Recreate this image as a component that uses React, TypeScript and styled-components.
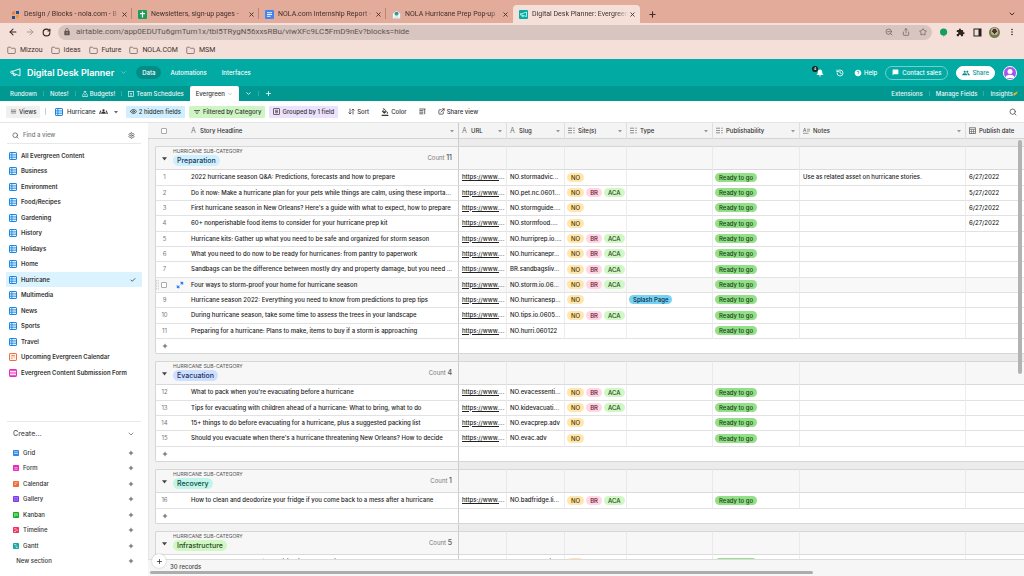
import React from 'react';
import styled, { createGlobalStyle, css } from 'styled-components';
import {
  ArrowLeft, ArrowRight, Check, ChevronDown, ExternalLink, Eye,
  Folder, History, Plus, RotateCw, Search, Settings, Share, Star, X, ZoomOut,
} from 'lucide-react';
import {
  MdChatBubble, MdExtension, MdFilterList, MdFormatColorFill,
  MdGroup, MdGroups, MdHelp, MdLock, MdMenu, MdMoreVert,
} from 'react-icons/md';

const Global = createGlobalStyle`
  *, *::before, *::after { box-sizing: border-box; }
  body { margin: 0; background: #fff; }
  button, input { font: inherit; color: inherit; margin: 0; }
  svg { display: block; flex: none; }
`;

const Shell = styled.div`
  display: flex;
  flex-direction: column;
  height: 100vh;
  overflow: hidden;
  font-family: Inter, "Liberation Sans", sans-serif;
  font-size: 6px;
  line-height: 8px;
  color: #333;
`;

const PlainButton = styled.button`
  display: flex;
  align-items: center;
  justify-content: center;
  padding: 0;
  border: 0;
  background: none;
  white-space: nowrap;
`;

const Spacer = styled.div`
  flex: 1;
`;

/* ---------- browser window ---------- */

const browserFont = 'Roboto, "Liberation Sans", sans-serif';

const TabStrip = styled.div`
  display: flex;
  align-items: flex-end;
  height: 23px;
  padding-left: 5px;
  background: #e3ab99;
  color: #40302b;
  font-family: ${browserFont};
  font-size: 7px;
`;

const BrowserTab = styled.div<{ $active?: boolean; $divider?: boolean }>`
  position: relative;
  display: flex;
  align-items: center;
  gap: 4px;
  width: 127px;
  height: 18px;
  padding: 0 4px 0 6px;
  border-radius: 4px 4px 0 0;
  background: ${(p) => (p.$active ? '#f5e0d9' : 'transparent')};
  ${(p) => p.$divider && css`
    &::after {
      content: '';
      position: absolute;
      right: 0;
      top: 3px;
      width: 1px;
      height: 11px;
      background: #b98675;
    }
  `}
`;

const TabTitle = styled.span`
  flex: 1;
  min-width: 0;
  margin-right: -3px;
  overflow: hidden;
  white-space: nowrap;
  mask-image: linear-gradient(90deg, #000 88%, transparent);
`;

const StripButton = styled(PlainButton)`
  width: 24px;
  height: 18px;
`;

const AddressRow = styled.div`
  display: flex;
  align-items: center;
  height: 18px;
  padding: 0 4px;
  background: #f5e0d9;
  color: #2e2523;
`;

const NavButton = styled(PlainButton)`
  width: 17px;
  height: 14px;
`;

const AddressBar = styled.div`
  display: flex;
  flex: 1;
  align-items: center;
  height: 15px;
  margin: 0 3px;
  padding: 0 1px 0 5px;
  border-radius: 8px;
  background: #d8c5bf;
  color: #5d5450;
`;

const AddressInput = styled.input`
  flex: 1;
  min-width: 0;
  padding: 0;
  margin-left: 5px;
  border: 0;
  outline: 0;
  background: none;
  font-family: ${browserFont};
  font-size: 8px;
  line-height: 10px;
`;

const Face = styled.span`
  width: 11px;
  height: 11px;
  border-radius: 50%;
  background: radial-gradient(circle at 50% 40%, #4c3428 25%, #b9a99a 26% 45%, #6f7f45 46%);
`;

const Bookmarks = styled.nav`
  display: flex;
  align-items: center;
  gap: 8px;
  height: 18px;
  padding: 0 7px;
  background: #f5e0d9;
  color: #3d322f;
  font-family: ${browserFont};
  font-size: 7px;
`;

const Bookmark = styled.a`
  display: flex;
  align-items: center;
  gap: 4px;
  color: inherit;
  text-decoration: none;
`;

/* ---------- base header ---------- */

const BaseBar = styled.header`
  display: flex;
  align-items: center;
  height: 27px;
  padding: 0 7px 0 10px;
  background: #02aaa4;
  color: #fff;
  font-weight: 500;
`;

const BaseTitle = styled.h1`
  margin: 0 6px 0 6px;
  font-size: 9px;
  line-height: 12px;
  font-weight: 600;
`;

const ModeButton = styled(PlainButton)<{ $active?: boolean }>`
  height: 13px;
  padding: 0 6px;
  border-radius: 7px;
  background: ${(p) => (p.$active ? '#068c87' : 'transparent')};
  font-weight: 500;
`;

const Modes = styled.div`
  display: flex;
  gap: 3px;
  margin-left: 9px;
`;

const BarActions = styled.div`
  display: flex;
  align-items: center;
  gap: 8px;
`;

const HeaderButton = styled(PlainButton)`
  position: relative;
  gap: 2px;
  min-width: 12px;
  height: 14px;
`;

const Badge = styled.span`
  position: absolute;
  top: 0;
  left: -2px;
  width: 6px;
  height: 6px;
  border-radius: 3px;
  background: #10201f;
  color: #fff;
  font-size: 4px;
  line-height: 6px;
  text-align: center;
`;

const PillButton = styled(PlainButton)<{ $solid?: boolean }>`
  gap: ${(p) => (p.$solid ? 2 : 3)}px;
  height: 14px;
  padding: 0 ${(p) => (p.$solid ? 5 : 6)}px;
  border: 1px solid ${(p) => (p.$solid ? '#fff' : '#6fd0cc')};
  border-radius: 7px;
  background: ${(p) => (p.$solid ? '#fff' : 'transparent')};
  color: ${(p) => (p.$solid ? '#02908b' : '#fff')};
`;

const Avatar = styled.span`
  width: 14px;
  height: 14px;
  border: 1px solid #fff;
  border-radius: 50%;
  background: #a455f0;
  overflow: hidden;
`;

const TableBar = styled.nav`
  display: flex;
  align-items: stretch;
  height: 15px;
  padding-left: 4px;
  background: #029892;
  color: #e9f7f6;
  font-weight: 500;
`;

const TableTab = styled(PlainButton)<{ $active?: boolean; $tight?: boolean }>`
  gap: ${(p) => (p.$tight ? 0 : 2)}px;
  padding: 0 6px;
  border-radius: 2px 2px 0 0;
  background: ${(p) => (p.$active ? '#fff' : 'transparent')};
  color: ${(p) => (p.$active ? '#333' : 'inherit')};
`;

const TableDivider = styled.span`
  align-self: center;
  width: 1px;
  height: 5px;
  background: #2fada8;
`;

/* ---------- view toolbar ---------- */

const Toolbar = styled.div`
  display: flex;
  align-items: center;
  gap: 4px;
  height: 21px;
  padding: 0 7px 0 6px;
  background: #fff;
  font-weight: 500;
`;

const ToolButton = styled(PlainButton)<{ $tint?: string }>`
  gap: 2px;
  height: 12px;
  padding: 0 4px;
  border-radius: 1px;
  background: ${(p) => p.$tint || 'transparent'};
`;

const ToolGroup = styled.div`
  display: flex;
  gap: 4px;
  padding-left: 2px;
`;

const ToolDivider = styled.span`
  width: 1px;
  height: 7px;
  margin: 0 1px;
  background: #ccc;
`;

/* ---------- sidebar ---------- */

const Body = styled.div`
  display: flex;
  flex: 1;
  min-height: 0;
  border-top: 1px solid #e4e4e4;
`;

const Sidebar = styled.aside`
  display: flex;
  flex-direction: column;
  flex: none;
  width: 148px;
  padding: 0 6px;
  background: #fff;
  font-weight: 600;
`;

const FindRow = styled.label`
  display: flex;
  align-items: center;
  gap: 4px;
  height: 21px;
  margin: 0 1px 4px;
  padding: 4px 6px 0 5px;
  border-bottom: 1px solid #e8e8e8;
  color: #555;
  font-weight: 500;
`;

const FindInput = styled.input`
  flex: 1;
  min-width: 0;
  padding: 0;
  border: 0;
  outline: 0;
  background: none;
  &::placeholder { color: #777; opacity: 1; }
`;

const List = styled.ul`
  margin: 0;
  padding: 0;
  list-style: none;
`;

const ListItem = styled.li<{ $selected?: boolean }>`
  display: flex;
  height: 15px;
  border-radius: 1px;
  background: ${(p) => (p.$selected ? '#dbf3fe' : 'transparent')};
  &:nth-child(even) { height: 16px; }
`;

const ViewButton = styled(PlainButton)`
  flex: 1;
  justify-content: flex-start;
  gap: 4px;
  padding: 0 6px 0 3px;
`;

const CreateButton = styled(ViewButton)`
  padding: 0 8px 0 7px;
`;

const CreateHeading = styled(PlainButton)`
  justify-content: space-between;
  height: 24px;
  margin: 0 1px;
  padding: 0 6px;
  border-top: 1px solid #e8e8e8;
  font-size: 7px;
  font-weight: 500;
  color: #555;
`;

const CreateBlock = styled.section`
  display: flex;
  flex-direction: column;
  padding-bottom: 7px;
  font-weight: 500;
`;

/* ---------- grid ---------- */

const GridPane = styled.main`
  position: relative;
  display: flex;
  flex: 1;
  flex-direction: column;
  min-width: 0;
  background: #f2f2f2;
`;

const GridScroll = styled.div`
  flex: 1;
  min-height: 0;
  overflow: hidden;
`;

const Table = styled.table`
  width: max(100%, 908px);
  table-layout: fixed;
  border-collapse: separate;
  border-spacing: 0;
`;

const Col = styled.col<{ $w?: number }>`
  width: ${(p) => (p.$w ? `${p.$w}px` : 'auto')};
`;

const Th = styled.th<{ $line?: string }>`
  height: 16px;
  padding: 0 4px 0 3px;
  border-bottom: 1px solid #d4d4d4;
  border-right: ${(p) => (p.$line ? `1px solid ${p.$line}` : '0')};
  background: #f4f4f4;
  font-weight: 500;
  text-align: left;
  white-space: nowrap;
`;

const ThInner = styled.span<{ $primary?: boolean }>`
  display: flex;
  align-items: center;
  gap: 3px;
  padding-left: ${(p) => (p.$primary ? 1 : 0)}px;
`;

const TextGlyph = styled.span`
  width: 6px;
  font-size: 7px;
  font-weight: 400;
  color: #777;
`;

const GapCell = styled.td<{ $dark?: boolean }>`
  height: 7px;
  padding: 0;
  background: ${(p) => (p.$dark ? '#ececec' : '#f2f2f2')};
  border-left: ${(p) => (p.$dark ? '0' : '1px solid #e4e4e4')};
  border-right: ${(p) => (p.$dark ? '0' : '1px solid #ccc')};
`;

const Gutter = styled.td`
  padding: 0;
  border-left: 1px solid #e4e4e4;
`;

const GroupHead = styled.td<{ $first?: boolean; $line?: string }>`
  height: 24px;
  padding: 0;
  border-top: 1px solid #d6d6d6;
  border-bottom: 1px solid #dadada;
  border-left: ${(p) => (p.$first ? '1px solid #d6d6d6' : '0')};
  border-right: 1px solid ${(p) => p.$line || '#e9e9e9'};
  border-radius: ${(p) => (p.$first ? '2px 0 0 0' : '0')};
  background: #f7f7f7;
`;

const GroupInner = styled.div`
  display: flex;
  align-items: center;
  padding-right: 6px;
`;

const Toggle = styled(PlainButton)`
  width: 17px;
  height: 14px;
`;

const GroupLabel = styled.div`
  display: flex;
  flex: 1;
  flex-direction: column;
  align-items: flex-start;
  padding-bottom: 3px;
`;

const GroupField = styled.span`
  font-size: 5px;
  line-height: 8px;
  color: #555;
`;

const Count = styled.span`
  color: #777;
  strong { font-size: 7px; font-weight: 500; color: #555; }
`;

const Chip = styled.span<{ $bg: string; $fg: string; $large?: boolean }>`
  flex: none;
  padding: 0 4px;
  border-radius: 6px;
  background: ${(p) => p.$bg};
  color: ${(p) => p.$fg};
  font-size: ${(p) => (p.$large ? 7 : 6)}px;
  font-weight: 500;
  line-height: ${(p) => (p.$large ? 11 : 9)}px;
`;

const Chips = styled.div`
  display: flex;
  gap: 2px;
  margin-left: -1px;
`;

const Row = styled.tr<{ $hover?: boolean }>`
  --cell: ${(p) => (p.$hover ? '#f8f8f8' : '#fff')};
  height: 15px;
  &:nth-child(3n) { height: 16px; }
`;

const Td = styled.td<{ $kind?: 'number' | 'icon' | 'head' }>`
  padding: 0 0 1px 3px;
  overflow: hidden;
  border-bottom: 1px solid #e2e2e2;
  border-right: 1px solid #ececec;
  background: var(--cell);
  color: #222;
  font-weight: 500;
  white-space: nowrap;
  ${(p) => p.$kind === 'number' && css`
    padding: 0 0 1px;
    border-left: 1px solid #d6d6d6;
    border-right: 0;
    color: #777;
    font-weight: 400;
    text-align: center;
  `}
  ${(p) => p.$kind === 'icon' && css`
    border-right: 0;
  `}
  ${(p) => p.$kind === 'head' && css`
    padding-left: 4px;
    border-right-color: #ccc;
  `}
`;

const AddCell = styled.td<{ $first?: boolean }>`
  padding: 0;
  border-bottom: 1px solid #d6d6d6;
  background: #fff;
  ${(p) => p.$first && css`
    border-left: 1px solid #d6d6d6;
    border-right: 1px solid #ccc;
    border-radius: 0 0 0 2px;
  `}
`;

const AddRow = styled.tr`
  height: 15px;
`;

const CellLink = styled.a`
  color: inherit;
  text-decoration: underline;
`;

const Tick = styled.input`
  display: block;
  appearance: none;
  width: 6px;
  height: 6px;
  border: 1px solid #aaa;
  border-radius: 1px;
  background: #fff;
`;

const TickWrap = styled.span<{ $grip?: boolean }>`
  display: flex;
  gap: 2px;
  justify-content: ${(p) => (p.$grip ? 'flex-start' : 'center')};
  align-items: center;
`;

const Footer = styled.footer`
  position: relative;
  display: flex;
  flex-direction: column;
  justify-content: space-between;
  height: 17px;
  padding: 3px 2px 2px;
  border-top: 1px solid #dcdcdc;
  background: #f6f6f6;
  color: #444;
  font-weight: 500;
`;

const RecordCount = styled.span`
  padding-left: 20px;
  line-height: 7px;
`;

const HThumb = styled.span`
  width: 76%;
  height: 3px;
  border-radius: 2px;
  background: #adadad;
`;

const VThumb = styled.span`
  position: absolute;
  top: 17px;
  right: 2px;
  width: 4px;
  height: 234px;
  border-radius: 2px;
  background: #b3b3b3;
`;

const AddRecord = styled(PlainButton)`
  position: absolute;
  left: 4px;
  top: -6px;
  width: 14px;
  height: 14px;
  border-radius: 50%;
  background: #fff;
  box-shadow: 0 0 2px #bbb;
`;

/* ---------- drawings ---------- */

const DesignLogo = () => (
  <svg width="9" height="9" viewBox="0 0 9 9">
    <path d="M1 2l3-1v3l-3 1z" fill="#e8833a" /><path d="M5 1h3v3H5z" fill="#1f4f8f" />
    <path d="M1 6h3v3H1z" fill="#1f4f8f" /><path d="M5 5l3-.5V8l-3 .5z" fill="#f09a3e" />
  </svg>
);
const SheetsLogo = () => (
  <svg width="9" height="9" viewBox="0 0 9 9">
    <rect width="9" height="9" rx="1" fill="#1c9d58" /><path d="M2 3.7h5M4.5 1.6v6" stroke="#fff" strokeWidth="1.2" />
  </svg>
);
const DocsLogo = () => (
  <svg width="9" height="9" viewBox="0 0 9 9">
    <rect width="9" height="9" rx="1" fill="#4384f3" /><path d="M2 2.7h5M2 4.5h5M2 6.3h3.5" stroke="#fff" strokeWidth=".9" />
  </svg>
);
const MailLogo = () => (
  <svg width="9" height="9" viewBox="0 0 9 9">
    <path d="M.5 3.5L4.5.5l4 3v5h-8z" fill="#f3f6f7" stroke="#9fb4b4" strokeWidth=".5" />
    <circle cx="4.5" cy="3.7" r="2" fill="#3fa66c" /><path d="M3 4l2-2 1.4 2z" fill="#4278d8" />
    <path d="M.5 8.5l4-3 4 3z" fill="#dfe6e6" />
  </svg>
);
const Horn = () => (
  <svg width="11" height="9" viewBox="0 0 11 9" fill="none" stroke="currentColor" strokeWidth=".9" strokeLinejoin="round">
    <path d="M10 .8v7L3 5.3H1.2l-.6-1.2.6-.9H3z" /><path d="M3.3 5.5v1.7l1.9.6V6.1M3 3.2v2" />
  </svg>
);
const PlannerLogo = () => (
  <svg width="9" height="9" viewBox="0 0 9 9">
    <rect width="9" height="9" rx="1" fill="#02aaa4" />
    <path d="M7.5 2v4.6L3 5H1.5V3.7H3zM3.2 5.2v1.5h1.5" fill="none" stroke="#fff" strokeWidth=".7" />
  </svg>
);
const Bell = () => (
  <svg width="8" height="8" viewBox="0 0 8 8" fill="currentColor">
    <path d="M4 .5c1.5 0 2.2 1.1 2.2 2.4 0 1.5.6 2 1.1 2.6v.5H.7v-.5c.5-.6 1.1-1.1 1.1-2.6C1.8 1.6 2.5.5 4 .5zM3 6.6h2a1 1 0 0 1-2 0z" />
  </svg>
);
const GridIcon = () => (
  <svg width="8" height="8" viewBox="0 0 8 8">
    <rect x=".5" y=".5" width="7" height="7" rx=".6" fill="#e6f4ff" stroke="#1a84dd" />
    <path d="M.5 2.9h7M.5 5.2h7M2.9.5v7" stroke="#1a84dd" strokeWidth=".9" />
  </svg>
);
const CalendarViewIcon = () => (
  <svg width="8" height="8" viewBox="0 0 8 8">
    <rect x=".5" y=".5" width="7" height="7" rx=".6" fill="#fff1eb" stroke="#f26b3c" />
    <path d="M2.3 2.5h3.5M2.3 4h1.2M4.5 4h1.2M2.3 5.5h1.2" stroke="#f26b3c" strokeWidth=".8" />
  </svg>
);
const FormViewIcon = () => (
  <svg width="8" height="8" viewBox="0 0 8 8">
    <rect x=".5" y=".5" width="7" height="7" rx=".6" fill="#ffe3f8" stroke="#e929ba" />
    <path d="M1 1.2h6M1 4h6M1 6.8h6" stroke="#e929ba" strokeWidth="1.1" />
  </svg>
);
const MiniIcon = ({ color, d }: { color: string; d: string }) => (
  <svg width="6" height="6" viewBox="0 0 6 6">
    <rect width="6" height="6" rx=".8" fill={color} /><path d={d} stroke="#fff" strokeWidth=".7" fill="none" opacity=".85" />
  </svg>
);
const SelectIcon = () => (
  <svg width="7" height="7" viewBox="0 0 7 7" stroke="#777" strokeWidth=".8" fill="none">
    <path d="M0 1.2h4M0 3.5h4M0 5.8h4" /><path d="M5.4 1.2h1.2M5.4 3.5h1.2M5.4 5.8h1.2" strokeWidth="1" />
  </svg>
);
const NotesIcon = () => (
  <svg width="7" height="7" viewBox="0 0 7 7" stroke="#777" strokeWidth=".7" fill="none">
    <path d="M.4 4.8L1.7 1 3 4.8M.8 3.6h1.8M4 2.3h3M4 4h3M0 6.3h5.5" />
  </svg>
);
const DateIcon = () => (
  <svg width="7" height="7" viewBox="0 0 7 7" stroke="#666" strokeWidth=".8" fill="none">
    <rect x=".5" y=".8" width="6" height="5.7" /><path d="M.5 2.5h6M2.5 2.5v4M4.5 2.5v4M.5 4.5h6" strokeWidth=".6" />
  </svg>
);
const GroupIcon = () => (
  <svg width="7" height="7" viewBox="0 0 7 7" stroke="#444" strokeWidth=".8" fill="none">
    <rect x=".5" y=".5" width="6" height="6" rx=".5" /><path d="M2 2.3h3M2 3.5h3M2 4.7h3" strokeWidth=".7" />
  </svg>
);
const RowHeightIcon = () => (
  <svg width="7" height="7" viewBox="0 0 7 7" stroke="#444" strokeWidth=".8" fill="none">
    <path d="M.3 1h6.2M.3 2.6h4M.3 4.2h4M.3 5.8h4M5.7 1v5.2" />
  </svg>
);
const SortIcon = () => (
  <svg width="7" height="7" viewBox="0 0 7 7" stroke="#444" strokeWidth=".8" fill="none">
    <path d="M2 .5V6M.5 4.5L2 6l1.500-1.5M5 6.5V1M3.500 2.5L5 1l1.500 1.5" />
  </svg>
);
const ExpandIcon = () => (
  <svg width="8" height="8" viewBox="0 0 8 8" stroke="#2d7ff9" strokeWidth="1.1" fill="#2d7ff9">
    <path d="M6.2 1.8L4.6 3.4M3.4 4.600L1.8 6.200" /><path d="M4.300 1H7v2.700zM1 4.300V7h2.700z" strokeWidth=".4" />
  </svg>
);
const Caret = ({ size = 4, color = '#999' }: { size?: number; color?: string }) => (
  <svg width={size} height={size} viewBox="0 0 4 4"><path d="M0 1h4L2 3.5z" fill={color} /></svg>
);
const PanelIcon = () => (
  <svg width="9" height="9" viewBox="0 0 9 9"><rect x="1" y="1" width="7" height="7" fill="none" stroke="#222" /><path d="M5.5 1H8v7H5.5z" fill="#222" /></svg>
);
const Balloon = () => (
  <svg width="9" height="9" viewBox="0 0 9 9"><path d="M4.5.5a3.5 3.5 0 0 1 1 6.9L4.5 9V7.5A3.5 3.5 0 0 1 4.5.5z" fill="#12a05c" /></svg>
);
const Person = () => (
  <svg width="12" height="12" viewBox="0 0 12 12"><circle cx="6" cy="4.5" r="2.5" fill="#fff" /><path d="M1.5 11c0-2.5 2-3.3 4.5-3.3s4.5.8 4.5 3.3z" fill="#fff" /></svg>
);
const Sparkle = () => (
  <svg width="5" height="6" viewBox="0 0 5 6"><path d="M.5 2.5L5 .3 3.5 3 .8 5z" fill="#f3b61f" /></svg>
);
const Bag = () => (
  <svg width="6" height="6" viewBox="0 0 6 6" fill="none" stroke="currentColor" strokeWidth=".7"><path d="M2 .5h2L3.6 1.7C5 2.5 5.5 4 5.5 5.5h-5C.5 4 1 2.5 2.4 1.7zM2 3.8h2" /></svg>
);
const SchedIcon = () => (
  <svg width="6" height="6" viewBox="0 0 6 6" fill="none" stroke="currentColor" strokeWidth=".7"><rect x=".5" y=".5" width="5" height="5" /><path d="M2 2.5h2M2 4h2" /></svg>
);
const Grip = () => (
  <svg width="3" height="10" viewBox="0 0 3 10" stroke="#bbb" strokeWidth=".8" strokeDasharray=".8 .8"><path d="M.5 0v10M2.3 0v10" /></svg>
);

/* ---------- data ---------- */

const browserTabs = [
  { title: 'Design / Blocks - nola.com - B', icon: <DesignLogo />, divider: true },
  { title: 'Newsletters, sign-up pages -', icon: <SheetsLogo />, divider: true },
  { title: 'NOLA.com Internship Report -', icon: <DocsLogo />, divider: true },
  { title: 'NOLA Hurricane Prep Pop-up', icon: <MailLogo /> },
  { title: 'Digital Desk Planner: Evergreen', icon: <PlannerLogo />, active: true },
];

const views = [
  'All Evergreen Content', 'Business', 'Environment', 'Food/Recipes', 'Gardening', 'History', 'Holidays',
  'Home', 'Hurricane', 'Multimedia', 'News', 'Sports', 'Travel', 'Upcoming Evergreen Calendar',
  'Evergreen Content Submission Form',
];

const viewIcon = (name: string) => {
  if (name.endsWith('Calendar')) return <CalendarViewIcon />;
  if (name.endsWith('Form')) return <FormViewIcon />;
  return <GridIcon />;
};

const creators = [
  { name: 'Grid', color: '#2d8ae0', d: 'M1 3.5h4M1 1.8h4' },
  { name: 'Form', color: '#e929ba', d: 'M1.3 2.7h3.4M1.3 4.3h3.4' },
  { name: 'Calendar', color: '#f26b3c', d: 'M1.5 1.8h3M1.5 3.5h1.5' },
  { name: 'Gallery', color: '#7c39ed', d: 'M1.2 1.8h1.4M3.4 1.8h1.4M1.2 4h1.4M3.4 4h1.4' },
  { name: 'Kanban', color: '#11af22', d: 'M1.8 1.2v3.6M3 1.2v2.4M4.2 1.2v3' },
  { name: 'Timeline', color: '#ef3061', d: 'M1 1.8h2.5M2.5 3.2h2.5M1 4.5h2' },
  { name: 'Gantt', color: '#14aaa0', d: 'M1.2 1.5h2M2.2 3h2M2.8 4.5h2' },
];

type Field = { name: string; icon: 'text' | 'select' | 'notes' | 'date' };
const fields: Field[] = [
  { name: 'URL', icon: 'text' },
  { name: 'Slug', icon: 'text' },
  { name: 'Site(s)', icon: 'select' },
  { name: 'Type', icon: 'select' },
  { name: 'Publishability', icon: 'select' },
  { name: 'Notes', icon: 'notes' },
  { name: 'Publish date', icon: 'date' },
];

const fieldIcon = (kind: Field['icon']) => {
  if (kind === 'text') return <TextGlyph>A</TextGlyph>;
  if (kind === 'select') return <SelectIcon />;
  if (kind === 'notes') return <NotesIcon />;
  return <DateIcon />;
};

type Rec = { title: string; slug: string; sites: string; type?: string; notes?: string; date?: string; hover?: boolean };
type Group = { name: string; bg: string; fg: string; count: number; start: number; rows: Rec[] };

const groups: Group[] = [
  {
    name: 'Preparation', bg: '#cfefff', fg: '#143b52', count: 11, start: 1,
    rows: [
      { title: '2022 hurricane season Q&A: Predictions, forecasts and how to prepare', slug: 'NO.stormadvic...', sites: 'NO', notes: 'Use as related asset on hurricane stories.', date: '6/27/2022' },
      { title: 'Do it now: Make a hurricane plan for your pets while things are calm, using these importa...', slug: 'NO.pet.nc.0601...', sites: 'NO BR ACA', date: '5/27/2022' },
      { title: "First hurricane season in New Orleans? Here's a guide with what to expect, how to prepare", slug: 'NO.stormguide....', sites: 'NO', date: '6/27/2022' },
      { title: '60+ nonperishable food items to consider for your hurricane prep kit', slug: 'NO.stormfood....', sites: 'NO', date: '6/27/2022' },
      { title: 'Hurricane kits: Gather up what you need to be safe and organized for storm season', slug: 'NO.hurriprep.io....', sites: 'NO BR ACA' },
      { title: 'What you need to do now to be ready for hurricanes: from pantry to paperwork', slug: 'NO.hurricanepr...', sites: 'NO BR ACA' },
      { title: 'Sandbags can be the difference between mostly dry and property damage, but you need ...', slug: 'BR.sandbagsliv...', sites: 'NO BR ACA' },
      { title: 'Four ways to storm-proof your home for hurricane season', slug: 'NO.storm.io.06...', sites: 'NO BR ACA', hover: true },
      { title: 'Hurricane season 2022: Everything you need to know from predictions to prep tips', slug: 'NO.hurricanesp...', sites: 'NO', type: 'Splash Page' },
      { title: 'During hurricane season, take some time to assess the trees in your landscape', slug: 'NO.tips.io.0605...', sites: 'NO BR ACA' },
      { title: 'Preparing for a hurricane: Plans to make, items to buy if a storm is approaching', slug: 'NO.hurri.060122', sites: '' },
    ],
  },
  {
    name: 'Evacuation', bg: '#cfdfff', fg: '#1c2f63', count: 4, start: 12,
    rows: [
      { title: "What to pack when you're evacuating before a hurricane", slug: 'NO.evacessenti...', sites: 'NO BR ACA' },
      { title: 'Tips for evacuating with children ahead of a hurricane: What to bring, what to do', slug: 'NO.kidevacuati...', sites: 'NO BR ACA' },
      { title: '15+ things to do before evacuating for a hurricane, plus a suggested packing list', slug: 'NO.evacprep.adv', sites: 'NO' },
      { title: "Should you evacuate when there's a hurricane threatening New Orleans? How to decide", slug: 'NO.evac.adv', sites: 'NO' },
    ],
  },
  {
    name: 'Recovery', bg: '#c2f5e9', fg: '#0b4a40', count: 1, start: 16,
    rows: [
      { title: 'How to clean and deodorize your fridge if you come back to a mess after a hurricane', slug: 'NO.badfridge.li...', sites: 'NO BR ACA' },
    ],
  },
  {
    name: 'Infrastructure', bg: '#d1f7c4', fg: '#25461a', count: 5, start: 17,
    rows: [
      { title: "How does New Orleans' $14.5 billion flood protection system work? Here's what to know", slug: 'NO.leveeprot.i...', sites: 'NO' },
    ],
  },
];

const siteColors: Record<string, [string, string]> = {
  NO: ['#ffe6ad', '#4a3500'],
  BR: ['#ffd6e2', '#5c1430'],
  ACA: ['#d1f7c4', '#21421a'],
};

/* ---------- sections ---------- */

const Browser = () => (
  <>
    <TabStrip>
      {browserTabs.map((t) => (
        <BrowserTab key={t.title} $active={t.active} $divider={t.divider}>
          {t.icon}
          <TabTitle>{t.title}</TabTitle>
          <PlainButton aria-label="Close tab"><X size={7} strokeWidth={3} /></PlainButton>
        </BrowserTab>
      ))}
      <StripButton aria-label="New tab"><Plus size={9} strokeWidth={3} /></StripButton>
      <Spacer />
      <StripButton aria-label="Search tabs"><ChevronDown size={8} strokeWidth={3} /></StripButton>
    </TabStrip>
    <AddressRow>
      <NavButton aria-label="Back"><ArrowLeft size={10} strokeWidth={2.5} /></NavButton>
      <NavButton aria-label="Forward"><ArrowRight size={10} strokeWidth={2} color="#9a8a85" /></NavButton>
      <NavButton aria-label="Reload"><RotateCw size={9} strokeWidth={3} /></NavButton>
      <AddressBar>
        <MdLock size={8} />
        <AddressInput
          aria-label="Address"
          defaultValue="airtable.com/app0EDUTu6gmTum1x/tbl5TRygN56xxsRBu/viwXFc9LC5FmD9nEv?blocks=hide"
        />
        <NavButton aria-label="Zoom"><ZoomOut size={8} /></NavButton>
        <NavButton aria-label="Share page"><Share size={8} /></NavButton>
        <NavButton aria-label="Bookmark page"><Star size={8} /></NavButton>
      </AddressBar>
      <NavButton aria-label="Balloon"><Balloon /></NavButton>
      <NavButton aria-label="Extensions"><MdExtension size={9} /></NavButton>
      <NavButton aria-label="Side panel"><PanelIcon /></NavButton>
      <NavButton aria-label="Profile"><Face /></NavButton>
      <NavButton aria-label="Menu"><MdMoreVert size={10} /></NavButton>
    </AddressRow>
    <Bookmarks>
      {['Mizzou', 'Ideas', 'Future', 'NOLA.COM', 'MSM'].map((b) => (
        <Bookmark key={b} href="#"><Folder size={9} strokeWidth={2} color="#6b5d58" />{b}</Bookmark>
      ))}
    </Bookmarks>
  </>
);

const BaseHeader = () => (
  <>
    <BaseBar>
      <Horn />
      <BaseTitle>Digital Desk Planner</BaseTitle>
      <PlainButton aria-label="Base menu"><ChevronDown size={7} color="#9be0dc" /></PlainButton>
      <Modes>
        <ModeButton $active>Data</ModeButton>
        <ModeButton>Automations</ModeButton>
        <ModeButton>Interfaces</ModeButton>
      </Modes>
      <Spacer />
      <BarActions>
        <HeaderButton aria-label="Notifications"><Bell /><Badge>4</Badge></HeaderButton>
        <HeaderButton aria-label="History"><History size={8} strokeWidth={2.5} /></HeaderButton>
        <HeaderButton><MdHelp size={8} />Help</HeaderButton>
        <PillButton><MdChatBubble size={7} />Contact sales</PillButton>
        <PillButton $solid><MdGroup size={8} />Share</PillButton>
        <Avatar><Person /></Avatar>
      </BarActions>
    </BaseBar>
    <TableBar>
      <TableTab>Rundown</TableTab><TableDivider />
      <TableTab>Notes!</TableTab><TableDivider />
      <TableTab><Bag />Budgets!</TableTab><TableDivider />
      <TableTab><SchedIcon />Team Schedules</TableTab>
      <TableTab $active>Evergreen<ChevronDown size={6} color="#999" /></TableTab>
      <TableTab aria-label="All tables"><ChevronDown size={7} strokeWidth={3} /></TableTab><TableDivider />
      <TableTab aria-label="Add table"><Plus size={7} strokeWidth={3} /></TableTab>
      <Spacer />
      <TableTab>Extensions</TableTab><TableDivider />
      <TableTab>Manage Fields</TableTab><TableDivider />
      <TableTab $tight>Insights<Sparkle /></TableTab>
    </TableBar>
  </>
);

const ViewToolbar = () => (
  <Toolbar>
    <ToolButton $tint="#f0f0f0"><MdMenu size={7} />Views</ToolButton>
    <ToolDivider />
    <ToolButton><GridIcon />&nbsp;Hurricane&nbsp;<MdGroups size={9} />&nbsp;<Caret color="#666" /></ToolButton>
    <ToolButton $tint="#cfefff"><Eye size={7} strokeWidth={2.5} />2 hidden fields</ToolButton>
    <ToolButton $tint="#cff5c4"><MdFilterList size={8} />Filtered by Category</ToolButton>
    <ToolButton $tint="#ece2fe"><GroupIcon />Grouped by 1 field</ToolButton>
    <ToolGroup>
      <ToolButton><SortIcon />Sort</ToolButton>
      <ToolButton><MdFormatColorFill size={8} />Color</ToolButton>
      <ToolButton aria-label="Row height"><RowHeightIcon /></ToolButton>
      <ToolButton><ExternalLink size={7} strokeWidth={2.5} />Share view</ToolButton>
    </ToolGroup>
    <Spacer />
    <PlainButton aria-label="Search records"><Search size={8} strokeWidth={2.5} color="#555" /></PlainButton>
  </Toolbar>
);

const ViewSidebar = () => (
  <Sidebar>
    <FindRow>
      <Search size={7} strokeWidth={2.5} />
      <FindInput aria-label="Find a view" placeholder="Find a view" />
      <Settings size={7} strokeWidth={2.5} />
    </FindRow>
    <List>
      {views.map((v) => (
        <ListItem key={v} $selected={v === 'Hurricane'}>
          <ViewButton>
            {viewIcon(v)}{v}
            {v === 'Hurricane' && <><Spacer /><Check size={6} strokeWidth={3} /></>}
          </ViewButton>
        </ListItem>
      ))}
    </List>
    <Spacer />
    <CreateBlock>
      <CreateHeading>Create...<ChevronDown size={8} /></CreateHeading>
      <List>
        {creators.map((c) => (
          <ListItem key={c.name}>
            <CreateButton>
              <MiniIcon color={c.color} d={c.d} />{c.name}<Spacer /><Plus size={6} strokeWidth={3} />
            </CreateButton>
          </ListItem>
        ))}
        <ListItem>
          <CreateButton>&nbsp;&nbsp;New section<Spacer /><Plus size={6} strokeWidth={3} /></CreateButton>
        </ListItem>
      </List>
    </CreateBlock>
  </Sidebar>
);

const RecordRow = ({ rec, n }: { rec: Rec; n: number }) => (
  <Row $hover={rec.hover}>
    <Gutter />
    <Td $kind="number">
      {rec.hover ? <TickWrap $grip><Grip /><Tick type="checkbox" aria-label={`Select record ${n}`} /></TickWrap> : n}
    </Td>
    <Td $kind="icon">{rec.hover && <ExpandIcon />}</Td>
    <Td $kind="head">{rec.title}</Td>
    <Td><CellLink href="#">https://www.</CellLink>...</Td>
    <Td>{rec.slug}</Td>
    <Td>
      <Chips>
        {rec.sites.split(' ').filter(Boolean).map((s) => (
          <Chip key={s} $bg={siteColors[s][0]} $fg={siteColors[s][1]}>{s}</Chip>
        ))}
      </Chips>
    </Td>
    <Td>{rec.type && <Chips><Chip $bg="#77d1f3" $fg="#04283f">{rec.type}</Chip></Chips>}</Td>
    <Td><Chips><Chip $bg="#93e088" $fg="#143d12">Ready to go</Chip></Chips></Td>
    <Td>{rec.notes}</Td>
    <Td>{rec.date}</Td>
  </Row>
);

const GroupBody = ({ g }: { g: Group }) => (
  <tbody>
    <tr>
      <GapCell colSpan={4} />
      <GapCell colSpan={7} $dark />
    </tr>
    <tr>
      <Gutter />
      <GroupHead colSpan={3} $first $line="#ccc">
        <GroupInner>
          <Toggle aria-label={`Collapse ${g.name}`}><Caret size={5} color="#444" /></Toggle>
          <GroupLabel>
            <GroupField>HURRICANE SUB-CATEGORY</GroupField>
            <Chip $large $bg={g.bg} $fg={g.fg}>{g.name}</Chip>
          </GroupLabel>
          <Count>Count <strong>{g.count}</strong></Count>
        </GroupInner>
      </GroupHead>
      {fields.map((f) => <GroupHead key={f.name} />)}
    </tr>
    {g.rows.map((rec, i) => <RecordRow key={rec.slug} rec={rec} n={g.start + i} />)}
    <AddRow>
      <Gutter />
      <AddCell colSpan={3} $first>
        <Toggle aria-label="Add record"><Plus size={6} strokeWidth={3} /></Toggle>
      </AddCell>
      <AddCell colSpan={7} />
    </AddRow>
  </tbody>
);

const Grid = () => (
  <GridPane>
    <GridScroll>
      <Table>
        <colgroup>
          {[7, 18, 14, 272, 48, 58, 62, 86, 87, 166].map((w, i) => <Col key={i} $w={w} />)}
          <Col />
        </colgroup>
        <thead>
          <tr>
            <Th />
            <Th><TickWrap><Tick type="checkbox" aria-label="Select all records" /></TickWrap></Th>
            <Th />
            <Th $line="#ccc">
              <ThInner $primary><TextGlyph>A</TextGlyph>Story Headline<Spacer /><Caret /></ThInner>
            </Th>
            {fields.map((f) => (
              <Th key={f.name} $line="#dedede">
                <ThInner>{fieldIcon(f.icon)}{f.name}<Spacer /><Caret /></ThInner>
              </Th>
            ))}
          </tr>
        </thead>
        {groups.map((g) => <GroupBody key={g.name} g={g} />)}
      </Table>
    </GridScroll>
    <VThumb />
    <Footer>
      <AddRecord aria-label="Add record"><Plus size={7} strokeWidth={3} /></AddRecord>
      <RecordCount>30 records</RecordCount>
      <HThumb />
    </Footer>
  </GridPane>
);

export default function App() {
  return (
    <Shell>
      <Global />
      <Browser />
      <BaseHeader />
      <ViewToolbar />
      <Body>
        <ViewSidebar />
        <Grid />
      </Body>
    </Shell>
  );
}
